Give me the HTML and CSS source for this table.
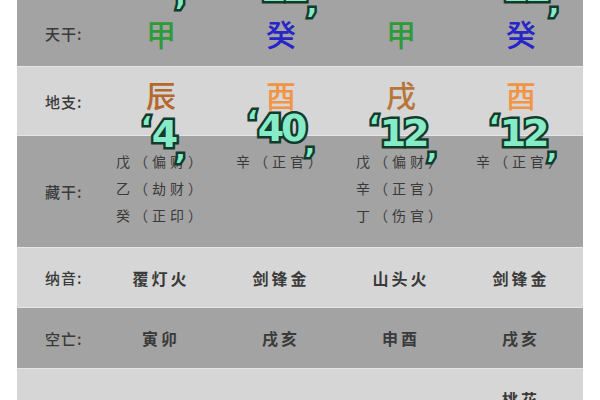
FILE: index.html
```html
<!DOCTYPE html>
<html lang="zh">
<head>
<meta charset="utf-8">
<link rel="stylesheet" href="styles.css">
</head>
<body>
<div class="table">
  <div class="row dark r1">
    <div class="label">天干:</div>
    <div class="cell big green">甲</div>
    <div class="cell big blue">癸</div>
    <div class="cell big green">甲</div>
    <div class="cell big blue">癸</div>
  </div>
  <div class="row light r2">
    <div class="label">地支:</div>
    <div class="cell big brown">辰</div>
    <div class="cell big orange">酉</div>
    <div class="cell big brown2">戌</div>
    <div class="cell big orange">酉</div>
  </div>
  <div class="row dark r3">
    <div class="label">藏干:</div>
    <div class="cell list"><span>戊（偏财）</span><span>乙（劫财）</span><span>癸（正印）</span></div>
    <div class="cell list"><span>辛（正官）</span></div>
    <div class="cell list"><span>戊（偏财）</span><span>辛（正官）</span><span>丁（伤官）</span></div>
    <div class="cell list"><span>辛（正官）</span></div>
  </div>
  <div class="row light r4">
    <div class="label">纳音:</div>
    <div class="cell mid">覆灯火</div>
    <div class="cell mid">剑锋金</div>
    <div class="cell mid">山头火</div>
    <div class="cell mid">剑锋金</div>
  </div>
  <div class="row dark r5">
    <div class="label">空亡:</div>
    <div class="cell mid">寅卯</div>
    <div class="cell mid">戌亥</div>
    <div class="cell mid">申酉</div>
    <div class="cell mid">戌亥</div>
  </div>
  <div class="row light r6">
    <div class="label"></div>
    <div class="cell mid"></div>
    <div class="cell mid"></div>
    <div class="cell mid"></div>
    <div class="cell mid last">桃花</div>
  </div>

  <div class="num n-top1"><span class="q">‘</span>5<span class="q qc">’</span></div>
  <div class="num n-top2"><span class="q">‘</span>12<span class="q qc">’</span></div>
  <div class="num n-top4"><span class="q">‘</span>12<span class="q qc">’</span></div>

  <div class="num n-a"><span class="q">‘</span>4<span class="q qc">’</span></div>
  <div class="num n-b"><span class="q">‘</span>40<span class="q qc">’</span></div>
  <div class="num n-c"><span class="q">‘</span>12<span class="q qc">’</span></div>
  <div class="num n-d"><span class="q">‘</span>12<span class="q qc">’</span></div>
</div>
</body>
</html>
```

FILE: styles.css
```css
html, body {
  margin: 0;
  padding: 0;
  background: #ffffff;
  overflow: hidden;
}
body {
  width: 600px;
  height: 400px;
  font-family: "Noto Sans CJK SC", "Noto Sans", sans-serif;
  color: #333;
}
.table {
  position: relative;
  margin-left: 17px;
  width: 566px;
  display: flex;
  flex-direction: column;
  background: #e6e6e6;
  row-gap: 1px;
  overflow: hidden;
  height: 400px;
}
.row {
  display: grid;
  grid-template-columns: 84px repeat(4, 120px);
  align-items: center;
  flex: none;
}
.dark { background: #a3a3a3; }
.light { background: #d6d6d6; }
.r1 { height: 66px; }
.r2 { height: 68px; }
.r3 { height: 111px; }
.r4 { height: 59px; }
.r5 { height: 60px; }
.r6 { height: 40px; align-items: start; }

.label {
  padding-left: 28px;
  font-size: 15px;
  font-weight: 500;
  color: #3a3a3a;
  letter-spacing: 1px;
}
.cell {
  text-align: center;
}
.big {
  font-size: 30px;
  font-weight: 500;
  line-height: 1;
}
.r2 .big { margin-top: -14px; }
.green { color: #2e9a3a; }
.blue { color: #2626c8; }
.brown { color: #b4682c; }
.brown2 { color: #b8753a; }
.orange { color: #f39444; }

.list {
  display: flex;
  flex-direction: column;
  align-items: center;
  font-size: 14px;
  line-height: 27px;
  color: #3a3a3a;
  align-self: start;
  padding-top: 12px;
}
.list span { letter-spacing: 4px; }
.mid {
  font-size: 16px;
  font-weight: 700;
  letter-spacing: 3px;
  color: #3a3a3a;
}
.last {
  padding-top: 18px;
}

.num {
  position: absolute;
  font-family: "DejaVu Sans", sans-serif;
  font-weight: 700;
  font-size: 38px;
  line-height: 1;
  color: #86ecc8;
  -webkit-text-stroke: 5px #143a2c;
  paint-order: stroke fill;
  letter-spacing: -3px;
  z-index: 2;
}
.q {
  font-size: 28px;
  vertical-align: 10px;
  letter-spacing: 0;
}
.qc {
  vertical-align: -28px;
}
.n-top1 { left: 124px; top: -40px; }
.n-top2 { left: 232px; top: -32px; }
.n-top4 { left: 474px; top: -32px; }
.n-a { left: 124px; top: 114px; }
.n-b { left: 230px; top: 108px; }
.n-c { left: 352px; top: 113px; }
.n-d { left: 472px; top: 113px; }
```
